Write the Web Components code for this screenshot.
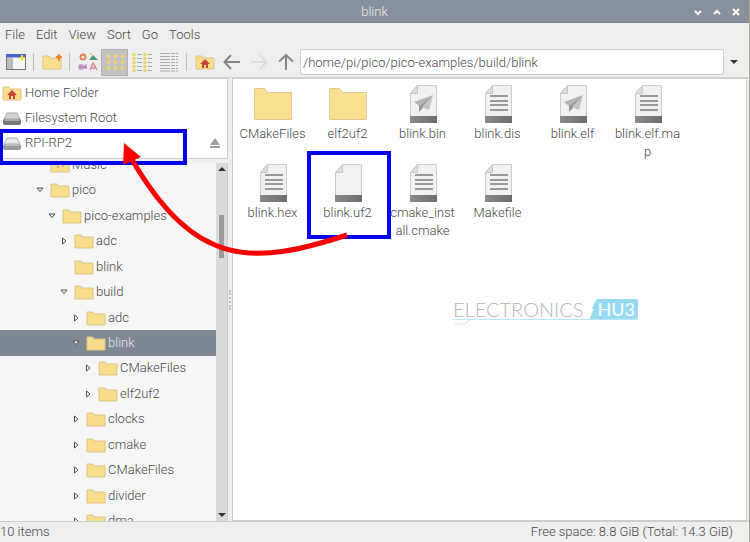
<!DOCTYPE html>
<html lang="en">
<head>
<meta charset="utf-8">
<title>blink</title>
<style>
html,body{height:100%}
body{margin:0;font:300 13px/18px Roboto,"Noto Sans",sans-serif;color:#484848;background:#eee;overflow:hidden}
</style>
</head>
<body>
<file-manager></file-manager>
<script>
const FOLDER = '<path d="M1 2h6l1 2h11v11H1z" fill="#f8dd8a" stroke="#dcc48a"/>';
const DRIVE = (a, b) => `<path d="M5 3h10l3 6H2z" fill="${a}" stroke="#aaa"/><rect x="1" y="9" width="18" height="6" rx="2" fill="${b}"/><path d="M3 10h14" stroke="#ddd"/>`;
const HOUSE = '<path d="M10 5l-5 5h2v4h2v-3h2v3h2v-4h2z" fill="#c8443f"/>';
const ICONS = {
  folder: ['0 0 20 16', FOLDER],
  home: ['0 0 20 16', FOLDER + HOUSE],
  music: ['0 0 20 16', FOLDER + '<path d="M8 11V6l5-1v5" fill="none" stroke="#e5a7a0" stroke-width="2"/>'],
  drive: ['0 0 20 16', DRIVE('#d2d2d2', '#777')],
  usb: ['0 0 20 16', DRIVE('#e9ece9', '#999')],
  addfolder: ['0 0 20 16', FOLDER + '<path d="M17 0l1 2 2 1-2 1-1 3-1-3-2-1 2-1z" fill="#ee8124" stroke="#ee8124"/>'],
  newwin: ['0 0 20 16', '<rect x=".5" y=".5" width="19" height="15" fill="#f7f7f7" stroke="#777"/><path d="M1 4h6v11H1z" fill="#bbb"/><path d="M0 0h20v3.500H0z" fill="#4565cb"/><path d="M16 1v6M13 4h6" stroke="#f3e04c" stroke-width="2"/>'],
  kinds: ['0 0 20 20', '<circle cx="5" cy="5" r="2.500" fill="none" stroke="#e5825a" stroke-width="2"/><path d="M11 8l4-5 5 5z" fill="#4d9970"/><circle cx="13" cy="2" r="1" fill="#e8c43c"/><path d="M2 12v6M4 12v6M6 13v4M8 12v5M0 15h9" stroke="#a766b3"/><path d="M12 18l3-7 4 7M13 16h5" fill="none" stroke="#dc8b93" stroke-width="1.500"/>'],
  grid: ['0 0 20 20', '<path d="M2 4h3M9 4h3M16 4h3M2 10h3M9 10h3M16 10h3M2 16h3M9 16h3M16 16h3" stroke="#f8d65e" stroke-width="3"/><path d="M2 6h3M9 6h3M16 6h3M2 12h3M9 12h3M16 12h3M2 18h3M9 18h3M16 18h3" stroke="#d8cfa8"/>'],
  compact: ['0 0 20 20', '<path d="M2 1v19M13 1v19" stroke="#ecd16c" stroke-width="3" stroke-dasharray="3 1"/><path d="M5 2.500h5M5 6.500h5M5 10.500h5M5 14.500h5M5 18.500h5M16 2.500h4M16 6.500h4M16 10.500h4M16 14.500h4M16 18.500h4" stroke="#aaa"/>'],
  list: ['0 0 20 20', '<path d="M1 1.500h18M1 4.500h18M1 7.500h18M1 10.500h18M1 13.500h18M1 16.500h18M1 19h18" stroke="#aaa" stroke-dasharray="10 1 4 1 2"/>'],
  back: ['0 0 18 16', '<path d="M17 8H2M8 1L1.500 8L8 15" fill="none" stroke="#858585" stroke-width="2"/>'],
  forward: ['0 0 18 16', '<path d="M1 8h15M10 1l6.500 7L10 15" fill="none" stroke="#ddd" stroke-width="2"/>'],
  up: ['0 0 16 18', '<path d="M8 17V2M1 8.500L8 2l7 6.500" fill="none" stroke="#858585" stroke-width="2"/>'],
  eject: ['0 0 10 10', '<path d="M5 0l5 7H0zM0 8h10v2H0z" fill="#9d9d9d"/>'],
  open: ['0 0 8 8', '<path d="M1 2h6L4 5.500z" fill="#fff" stroke="#4d4d4d"/>'],
  closed: ['0 0 8 8', '<path d="M2.500 1v6L6 4z" fill="#fff" stroke="#4d4d4d"/>'],
  none: ['0 0 8 8', ''],
  down: ['0 0 8 6', '<path d="M0 1h8L4 5z" fill="#333"/>'],
  top: ['0 0 8 6', '<path d="M0 5h8L4 1z" fill="#333"/>'],
  min: ['0 0 8 8', '<path d="M1 3l3 3 3-3" fill="none" stroke="#fff" stroke-width="2"/>'],
  max: ['0 0 8 8', '<path d="M1 6l3-3 3 3" fill="none" stroke="#fff" stroke-width="2"/>'],
  close: ['0 0 8 8', '<path d="M1 1l6 6M7 1L1 7" stroke="#fff" stroke-width="2"/>'],
  bigfolder: ['0 0 40 38', '<path d="M1.500 3.500h10l3 4h24v27h-37z" fill="#f9df90" stroke="#e0ca92"/>'],
  page: ['0 0 40 38', '<defs><linearGradient id="g"><stop stop-color="#8a8a8a"/><stop offset="1" stop-color="#6c6c6c"/></linearGradient></defs><path d="M7.500 8.500l7-8h19v31h-26z" fill="#f1f1f1" stroke="#ccc"/><path d="M7.500 8.500h7v-8z" fill="#ddd" stroke="#c8c8c8"/><path d="M7 31h27v7H7z" fill="url(#g)"/>']
};
ICONS.text = [ICONS.page[0], ICONS.page[1] + '<path d="M12 11h18M12 16h18M12 20h18M12 25h18" stroke="#999" stroke-width="2"/>'];
ICONS.plane = [ICONS.page[0], ICONS.page[1] + '<path d="M30 10L11 17l5 4z" fill="#b5b5b5"/><path d="M30 10L16 21v6l4-4z" fill="#989898"/><path d="M30 10L19 22l7 3z" fill="#c3c3c3"/>'];

const define = (name, html) => customElements.define(name, class extends HTMLElement {
  connectedCallback() {
    if (this.shadowRoot) return;
    const root = this.attachShadow({ mode: 'open' });
    const t = document.createElement('template');
    t.innerHTML = '<style>*{box-sizing:border-box}button{font:inherit;color:inherit;background:none;border:0;padding:0;margin:0}</style>' + html(this);
    root.append(t.content.cloneNode(true));
  }
});
const at = (el, n) => el.getAttribute(n) || '';

define('ui-icon', el => {
  const [box, art] = ICONS[at(el, 'name')];
  const [, , w, h] = box.split(' ');
  return `<style>:host{display:block;flex:none}svg{display:block}</style><svg viewBox="${box}" width="${w}" height="${h}" aria-hidden="true">${art}</svg>`;
});

define('title-bar', () => `<style>
:host{display:grid;grid-template-columns:1fr auto 1fr;align-items:center;height:23px;padding-top:2px;box-sizing:border-box;background:#87919b;color:#e9edf0;border-bottom:1px solid #7b858e}
div{display:flex;justify-content:flex-end;gap:11px;padding-right:9px}
</style><span></span><slot></slot><div>
<button aria-label="Minimize"><ui-icon name="min"></ui-icon></button><button aria-label="Maximize"><ui-icon name="max"></ui-icon></button><button aria-label="Close"><ui-icon name="close"></ui-icon></button></div>`);

define('menu-bar', el => `<style>
:host{display:flex;gap:11px;padding:0 5px;height:24px;align-items:center}
</style>${at(el, 'items').split(',').map(i => `<button>${i}</button>`).join('')}`);

define('tool-button', el => `<style>
:host{display:block;flex:none}
button{width:27px;height:27px;display:grid;place-items:center}
:host([pressed]) button{background:#c4c2c1;border:1px solid #b0b0b0}
</style><button aria-label="${at(el, 'label')}"><ui-icon name="${at(el, 'icon')}"></ui-icon></button>`);

define('tool-bar', () => `<style>
:host{display:flex;align-items:center;height:31px;padding:0 6px 0 2px;border-bottom:1px solid #d4d4d4}
i{width:1px;height:18px;background:#bbb;margin:0 4px}
input{flex:1;min-width:0;height:26px;border:1px solid #ccc;border-radius:3px;background:#fff;font:inherit;color:inherit;padding:0 2px;margin-left:1px}
.drop{width:18px;height:26px;display:grid;place-items:center;margin-left:1px}
</style>
<tool-button icon="newwin" label="New window"></tool-button><i></i>
<tool-button icon="addfolder" label="New folder"></tool-button><i></i>
<tool-button icon="kinds" label="Thumbnails"></tool-button>
<tool-button icon="grid" label="Icons" pressed></tool-button>
<tool-button icon="compact" label="Compact"></tool-button>
<tool-button icon="list" label="List"></tool-button><i></i>
<tool-button icon="home" label="Home"></tool-button>
<tool-button icon="back" label="Back"></tool-button>
<tool-button icon="forward" label="Forward"></tool-button>
<tool-button icon="up" label="Up"></tool-button>
<input aria-label="Path" value="/home/pi/pico/pico-examples/build/blink">
<button class="drop" aria-label="Path history"><ui-icon name="down"></ui-icon></button>`);

define('place-item', el => `<style>
:host{display:flex;align-items:center;padding:0 7px 0 2px}
.name{flex:1;display:flex;align-items:center;gap:3px;text-align:left}
</style><button class="name"><ui-icon name="${at(el, 'icon')}"></ui-icon><slot></slot></button>${el.hasAttribute('eject') ? '<button aria-label="Eject"><ui-icon name="eject"></ui-icon></button>' : ''}`);

define('places-list', () => `<style>
:host{display:grid;grid-auto-rows:1fr;height:81px;padding:1px 0 3px;background:#fff;border:1px solid #ccc;border-left:0;box-sizing:border-box}
</style><slot></slot>`);

define('tree-item', el => `<style>
:host{display:flex;align-items:center;min-height:0;padding-left:${12 * (+at(el, 'level')) + 24}px}
:host([selected]){background:#7f8993;color:#e2e6e9}
button{display:flex;align-items:center;gap:2px}
.twist{padding-right:6px}
</style><button class="twist" aria-label="Toggle"><ui-icon name="${at(el, 'state') || 'none'}"></ui-icon></button><button><ui-icon name="${at(el, 'icon') || 'folder'}"></ui-icon><slot></slot></button>`);

define('folder-tree', () => `<style>
:host{display:flex;flex:1;min-height:0;overflow:hidden;background:#f6f6f6;border-right:1px solid #ccc}
.rows{flex:1;display:grid;grid-auto-rows:1fr;margin:-11px 0 -13px}
.bar{width:11px;background:#dadada;display:grid;grid-template-rows:16fr 14fr 85fr;justify-items:center;padding:3px 0}
.bar b{width:5px;background:#9a9a9a;grid-row:2}
.bar ui-icon:last-child{align-self:end}
</style><div class="rows"><slot></slot></div><div class="bar"><ui-icon name="top"></ui-icon><b></b><ui-icon name="down"></ui-icon></div>`);

define('file-tile', el => `<style>
:host{display:block}
button{display:flex;flex-direction:column;align-items:center;gap:2px;width:100%}
span{width:68px;min-height:36px;word-break:break-all;text-align:center}
</style><button><ui-icon name="${at(el, 'icon')}"></ui-icon><span><slot></slot></span></button>`);

define('file-grid', () => `<style>
:host{display:grid;grid-template-columns:repeat(6,75px);grid-auto-rows:max-content;row-gap:3px;padding:6px 2px;align-content:start;background:#fff;border:1px solid #ccc;min-width:0;min-height:0}
</style><slot></slot>`);

define('hub-logo', () => `<style>
:host{display:flex;align-items:center;position:absolute;left:453px;top:299px;color:#b4b4b4;font:300 20px/20px Lato,sans-serif}
b{font-size:18px;font-weight:400;color:#fff;background:#98daf1;padding:0 3px 0 8px;border-radius:0 2px 2px 0;clip-path:polygon(7px 0,100% 0,100% 100%,0 100%,4px 50%,2px 50%)}
span{padding-right:6px}
svg{position:absolute;left:0;top:100%;width:100%;height:6px}
</style><span>ELECTRONICS</span><b>HU3</b><svg aria-hidden="true"><path d="M0 .5h186M2 5h10l5-4.500" fill="none" stroke="#b9e6f4"/></svg>`);

define('callout-marks', () => `<style>
:host{position:absolute;left:0;top:0;pointer-events:none}svg{display:block}
</style><svg width="400" height="280" aria-hidden="true"><g fill="none" stroke="#0000f0" stroke-width="4"><path d="M1 131h184v32H1z"/><path d="M309 153h80v84h-80z"/></g>
<path d="M347 235C252 266 195 268 131 158" fill="none" stroke="#f80000" stroke-width="5"/><path d="M124 143l17 14-18 8z" fill="#f80000"/></svg>`);

define('file-manager', () => `<style>
:host{display:flex;flex-direction:column;height:100%;position:relative;border-right:1px solid #b9a48f}
main{flex:1;min-height:0;display:grid;grid-template-columns:228px 4px 1fr;padding-right:2px}
aside{display:flex;flex-direction:column;gap:4px;min-height:0}
.grip{align-self:center;height:20px;border-left:2px dotted #bbb;margin-left:1px}
footer{height:21px;border-top:1px solid #ccc;display:flex;justify-content:space-between;align-items:center;padding:0 16px 0 0}
</style>
<title-bar>blink</title-bar>
<menu-bar items="File,Edit,View,Sort,Go,Tools"></menu-bar>
<tool-bar></tool-bar>
<main><aside>
<places-list><place-item icon="home">Home Folder</place-item><place-item icon="drive">Filesystem Root</place-item><place-item icon="usb" eject>RPI-RP2</place-item></places-list>
<folder-tree>
<tree-item level="1" icon="music">Music</tree-item>
<tree-item level="1" state="open">pico</tree-item>
<tree-item level="2" state="open">pico-examples</tree-item>
<tree-item level="3" state="closed">adc</tree-item>
<tree-item level="3">blink</tree-item>
<tree-item level="3" state="open">build</tree-item>
<tree-item level="4" state="closed">adc</tree-item>
<tree-item level="4" state="open" selected>blink</tree-item>
<tree-item level="5" state="closed">CMakeFiles</tree-item>
<tree-item level="5" state="closed">elf2uf2</tree-item>
<tree-item level="4" state="closed">clocks</tree-item>
<tree-item level="4" state="closed">cmake</tree-item>
<tree-item level="4" state="closed">CMakeFiles</tree-item>
<tree-item level="4" state="closed">divider</tree-item>
<tree-item level="4" state="closed">dma</tree-item>
</folder-tree></aside><div class="grip"></div>
<file-grid>
<file-tile icon="bigfolder">CMakeFiles</file-tile><file-tile icon="bigfolder">elf2uf2</file-tile><file-tile icon="plane">blink.bin</file-tile><file-tile icon="text">blink.dis</file-tile><file-tile icon="plane">blink.elf</file-tile><file-tile icon="text">blink.elf.map</file-tile>
<file-tile icon="text">blink.hex</file-tile><file-tile icon="page">blink.uf2</file-tile><file-tile icon="text">cmake_install.cmake</file-tile><file-tile icon="text">Makefile</file-tile>
</file-grid></main>
<footer><span>10 items</span><span>Free space: 8.8 GiB (Total: 14.3 GiB)</span></footer>
<hub-logo></hub-logo><callout-marks></callout-marks>`);
</script>
</body>
</html>
